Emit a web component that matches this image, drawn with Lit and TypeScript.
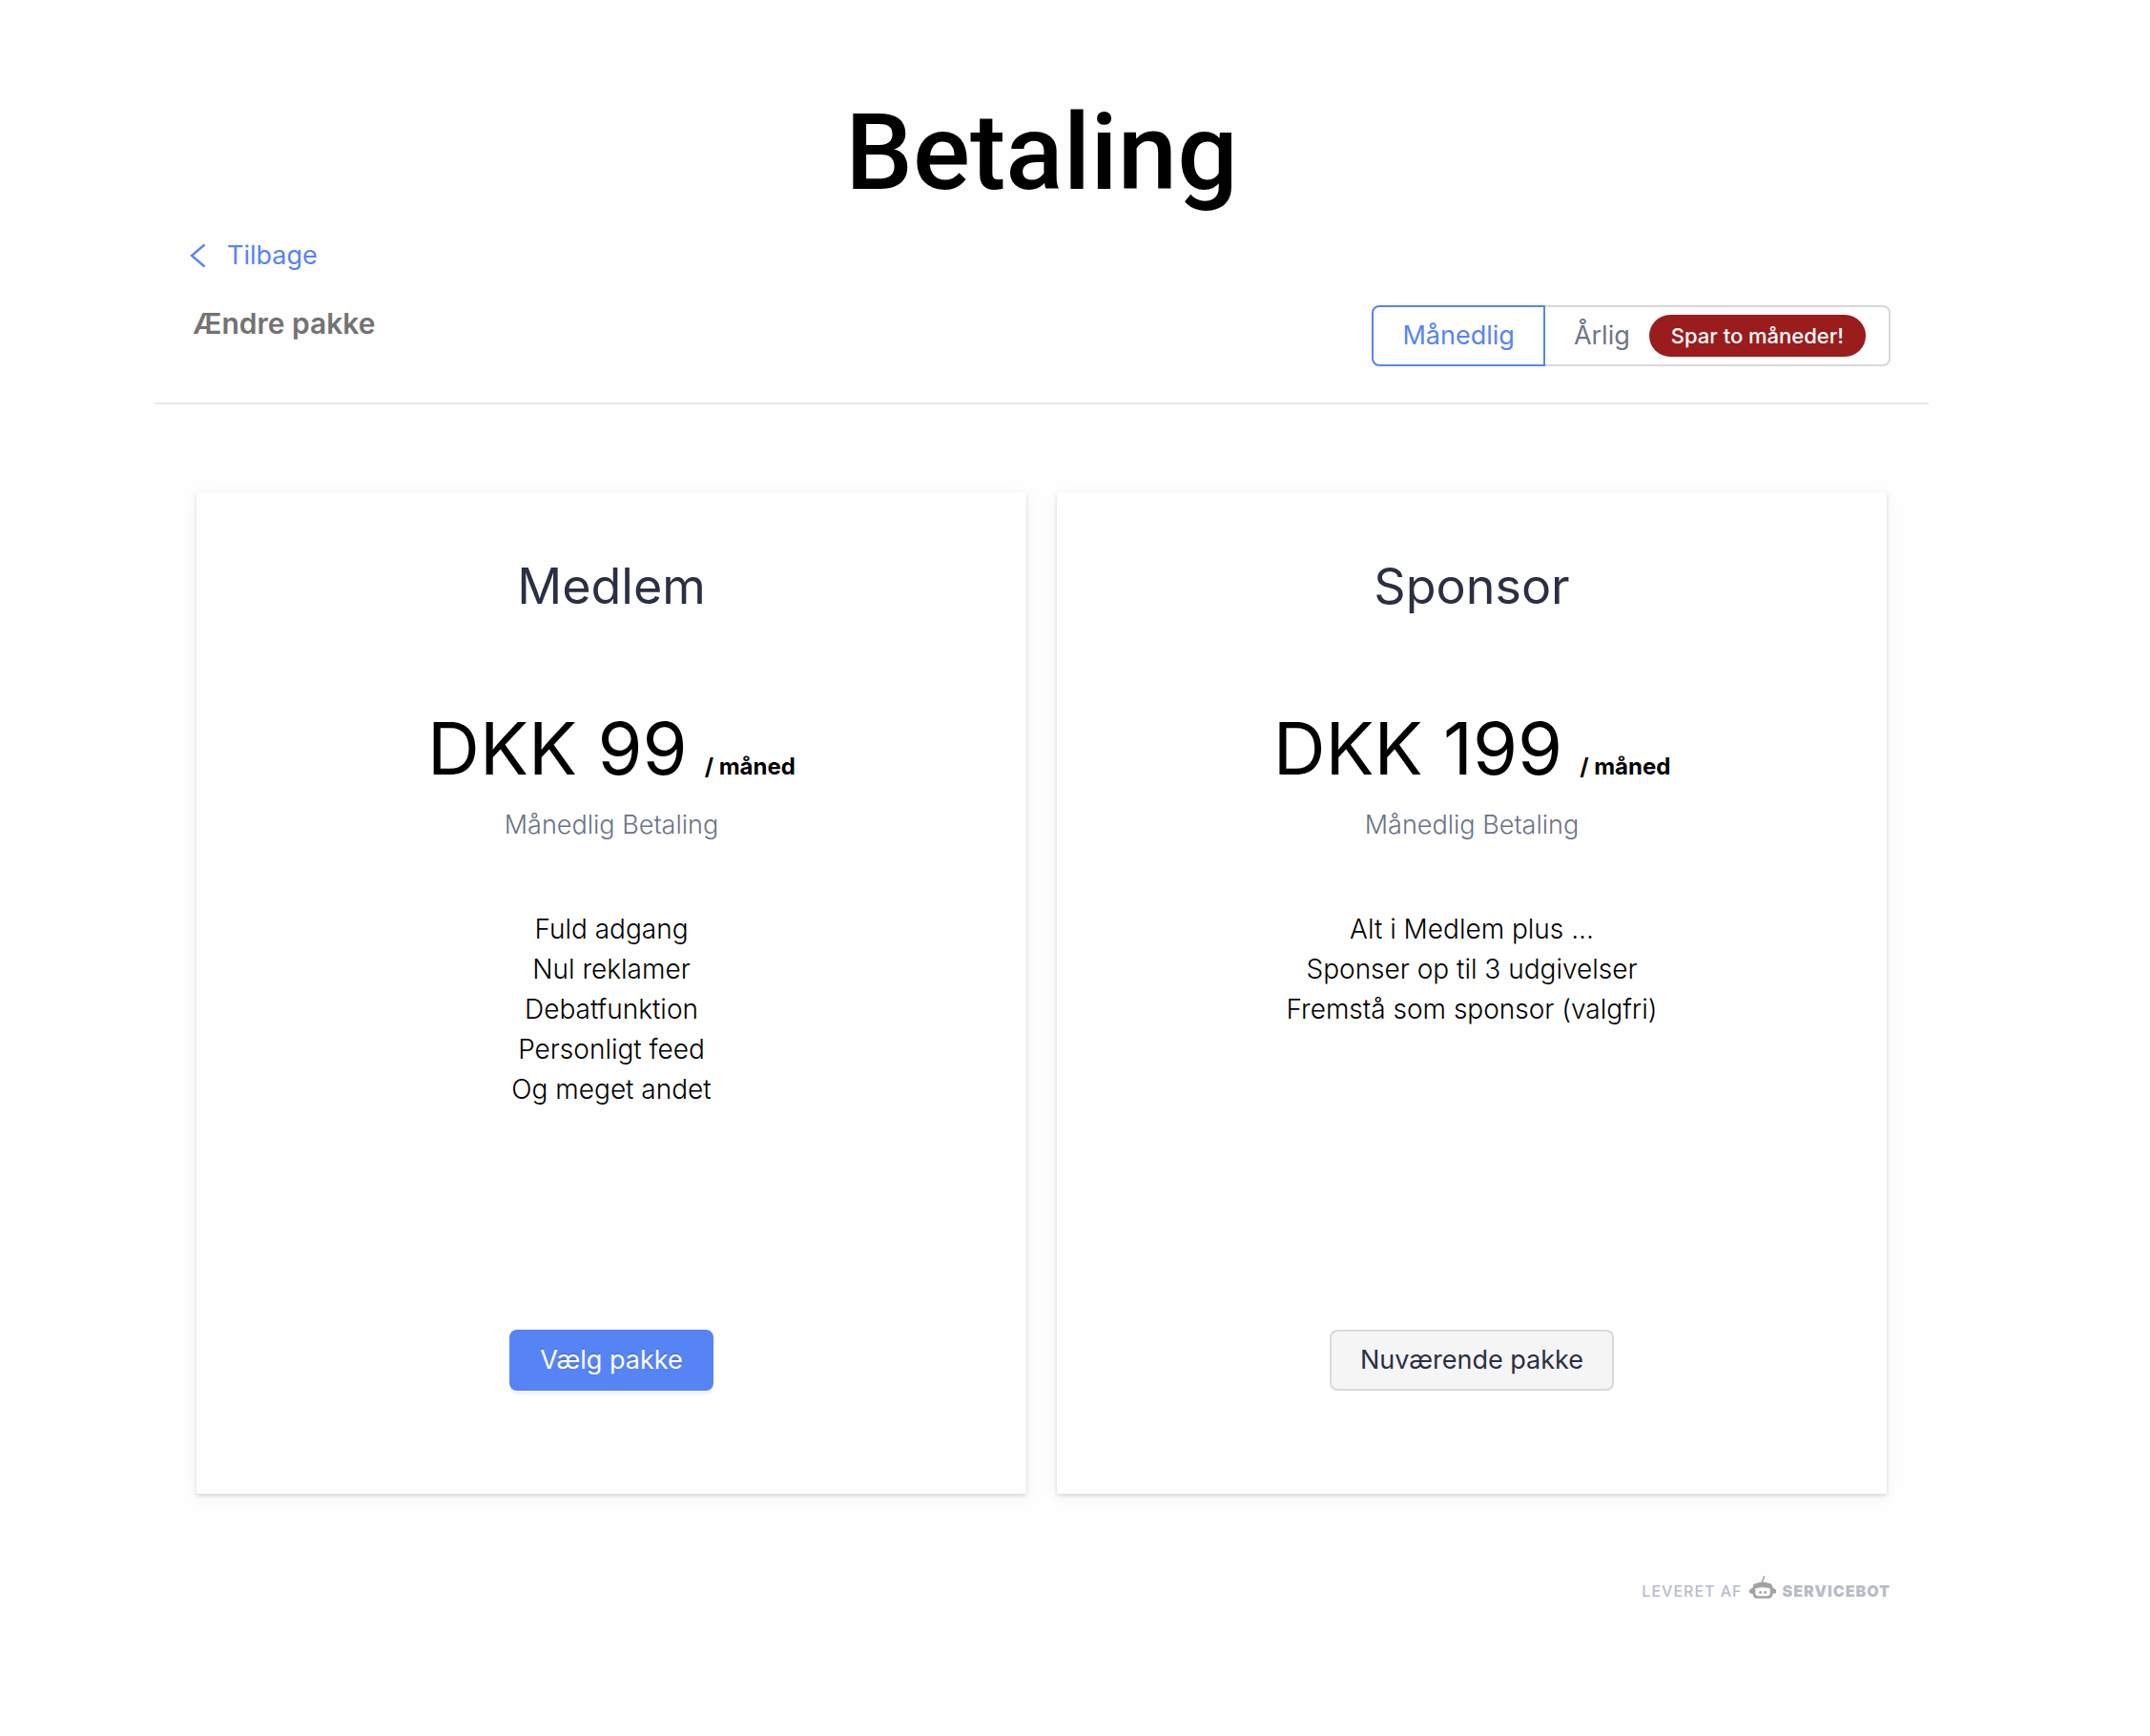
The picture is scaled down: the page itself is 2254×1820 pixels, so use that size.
import { LitElement, html, css } from "lit";
import { customElement, property, state } from "lit/decorators.js";

interface Plan {
  name: string;
  price: string;
  features: string[];
  current: boolean;
}

const PLANS: Plan[] = [
  {
    name: "Medlem",
    price: "DKK 99",
    features: ["Fuld adgang", "Nul reklamer", "Debatfunktion", "Personligt feed", "Og meget andet"],
    current: false,
  },
  {
    name: "Sponsor",
    price: "DKK 199",
    features: ["Alt i Medlem plus ...", "Sponser op til 3 udgivelser", "Fremstå som sponsor (valgfri)"],
    current: true,
  },
];

@customElement("plan-card")
export class PlanCard extends LitElement {
  @property({ attribute: false }) plan!: Plan;

  static styles = css`
    :host {
      display: flex;
      flex: 1 1 0;
      min-width: 0;
    }
    .card {
      flex: 1;
      box-sizing: border-box;
      min-height: 1050px;
      padding: 64px 24px 108px;
      display: flex;
      flex-direction: column;
      align-items: center;
      text-align: center;
      background: #fff;
      box-shadow: 0 2px 4px rgba(50, 50, 93, 0.16), 0 4px 16px rgba(0, 0, 0, 0.05);
    }
    .name {
      margin: 0;
      font-size: 52px;
      line-height: 70px;
      font-weight: 400;
      color: #2a2f45;
    }
    .price {
      margin: 86px 0 0;
      display: flex;
      align-items: baseline;
      gap: 18px;
      color: #000;
    }
    .amount {
      font-size: 76px;
      line-height: 96px;
      font-weight: 400;
    }
    .period {
      font-size: 24px;
      line-height: 32px;
      font-weight: 700;
    }
    .billing {
      margin: 12px 0 0;
      font-size: 27px;
      line-height: 42px;
      font-weight: 300;
      color: #697386;
    }
    .features {
      list-style: none;
      margin: 67px 0 0;
      padding: 0;
      font-size: 28px;
      line-height: 42px;
      font-weight: 300;
      color: #000;
    }
    .choose {
      margin-top: auto;
      box-sizing: border-box;
      height: 64px;
      padding: 0 30px;
      border: 2px solid #5784f5;
      border-radius: 8px;
      background: #5784f5;
      color: #fff;
      font: 400 27px/42px Inter, "Liberation Sans", sans-serif;
      text-shadow: 0 -2px 0 rgba(0, 0, 0, 0.12);
      box-shadow: 0 4px 0 rgba(0, 0, 0, 0.045);
      cursor: pointer;
    }
    .choose:disabled {
      border-color: #d9d9d9;
      background: #f5f5f5;
      color: #2a2f45;
      text-shadow: none;
      box-shadow: none;
      cursor: default;
    }
  `;

  render() {
    const p = this.plan;
    return html`
      <article class="card">
        <h3 class="name">${p.name}</h3>
        <p class="price"><span class="amount">${p.price}</span><span class="period">/ måned</span></p>
        <p class="billing">Månedlig Betaling</p>
        <ul class="features">
          ${p.features.map((f) => html`<li>${f}</li>`)}
        </ul>
        <button class="choose" type="button" ?disabled=${p.current}>
          ${p.current ? "Nuværende pakke" : "Vælg pakke"}
        </button>
      </article>
    `;
  }
}

@customElement("app-root")
export class AppRoot extends LitElement {
  @state() private interval: "month" | "year" = "month";

  static styles = css`
    :host {
      display: block;
      box-sizing: border-box;
      min-height: 100vh;
      padding: 94px 232px 96px 162px;
      background: #fefefe;
      font-family: Inter, "Liberation Sans", sans-serif;
    }
    .title {
      margin: 0;
      text-align: center;
      font-family: Roboto, "Liberation Sans", sans-serif;
      font-size: 112px;
      line-height: 132px;
      font-weight: 500;
      color: #000;
    }
    .back {
      width: max-content;
      margin: 21px 0 0 36px;
      display: flex;
      align-items: center;
      gap: 22px;
      font-size: 27px;
      line-height: 42px;
      font-weight: 400;
      color: #5784f5;
      text-decoration: none;
    }
    .chevron {
      width: 18px;
      height: 26px;
    }
    .bar {
      display: flex;
      align-items: flex-start;
      justify-content: space-between;
      margin-top: 31px;
      padding: 0 40px 38px;
      border-bottom: 2px solid #e8e8e8;
    }
    .heading {
      margin: 0;
      font-size: 30px;
      line-height: 38px;
      font-weight: 600;
      color: #737373;
    }
    .toggle {
      display: flex;
      margin: 0;
      padding: 0;
      border: 0;
    }
    .option {
      box-sizing: border-box;
      height: 64px;
      padding: 0 30px;
      display: flex;
      align-items: center;
      gap: 20px;
      border: 2px solid #d9d9d9;
      font-size: 27px;
      line-height: 42px;
      color: #6f7787;
      background: #fff;
      cursor: pointer;
    }
    .option:first-of-type {
      border-radius: 8px 0 0 8px;
      border-right-width: 0;
    }
    .option:last-of-type {
      padding-right: 24px;
      border-radius: 0 8px 8px 0;
      border-left-width: 0;
    }
    .option:has(.radio:checked) {
      border-width: 2px;
      border-color: #5784f5;
      color: #5784f5;
    }
    .radio {
      appearance: none;
      width: 0;
      height: 0;
      margin: 0 -20px 0 0;
    }
    .saving {
      padding: 0 23px;
      border-radius: 22px;
      background: #9b1c1c;
      color: #fff;
      font-size: 22px;
      line-height: 44px;
      font-weight: 500;
    }
    .plans {
      display: flex;
      gap: 32px;
      margin-top: 92px;
      padding: 0 44px;
    }
    .credit {
      margin-top: 86px;
      padding: 0 40px;
      display: flex;
      justify-content: flex-end;
    }
    .credit-link {
      display: flex;
      align-items: center;
      gap: 7px;
      font-size: 16px;
      line-height: 24px;
      font-weight: 500;
      letter-spacing: 1px;
      color: #b8bcc8;
      text-decoration: none;
    }
    .brand {
      font-weight: 900;
    }
    .robot {
      width: 28px;
      height: 24px;
      margin-bottom: 8px;
    }
  `;

  render() {
    return html`
      <h1 class="title">Betaling</h1>
      <a class="back" href="#">
        <svg class="chevron" viewBox="0 0 18 26" fill="none" stroke="currentColor" stroke-width="2.4" aria-hidden="true">
          <path d="M16.5 1.5 3 13l13.500 11.500" />
        </svg>
        Tilbage
      </a>
      <header class="bar">
        <h2 class="heading">Ændre pakke</h2>
        <fieldset class="toggle" aria-label="Betaling">
          <label class="option">
            <input class="radio" type="radio" name="interval" value="month"
              .checked=${this.interval === "month"} @change=${() => (this.interval = "month")} />
            <span>Månedlig</span>
          </label>
          <label class="option">
            <input class="radio" type="radio" name="interval" value="year"
              .checked=${this.interval === "year"} @change=${() => (this.interval = "year")} />
            <span>Årlig</span>
            <span class="saving">Spar to måneder!</span>
          </label>
        </fieldset>
      </header>
      <section class="plans">
        ${PLANS.map((plan) => html`<plan-card .plan=${plan}></plan-card>`)}
      </section>
      <footer class="credit">
        <a class="credit-link" href="#">
          <span>LEVERET AF</span>
          <svg class="robot" viewBox="0 0 28 24" aria-hidden="true">
            <path d="M13.500 8V4.500L15.200 3V0.300" fill="none" stroke="#a3a3a3" stroke-width="1.500" />
            <path d="M8 8.500Q9 6.500 14 6.500T20 8.500Z" fill="#a3a3a3" />
            <rect x="0" y="14" width="2.500" height="4.500" rx="1" fill="#a3a3a3" />
            <rect x="25.500" y="14" width="2.500" height="4.500" rx="1" fill="#a3a3a3" />
            <path fill="#a3a3a3" fill-rule="evenodd" d="M8 7.800h12q4 0 4.500 5h1.500v6h-1.500q-.5 5-4.500 5H8q-4 0-4.500-5H2v-6h1.500q.5-5 4.500-5ZM6.200 13.500v4q0 3.800 3.300 3.800h9q3.300 0 3.300-3.800v-4Q14 11 6.200 13.500Z" />
            <circle cx="11.500" cy="17.500" r="1.400" fill="#a3a3a3" />
            <circle cx="16.500" cy="17.500" r="1.400" fill="#a3a3a3" />
          </svg>
          <span class="brand">SERVICEBOT</span>
        </a>
      </footer>
    `;
  }
}
